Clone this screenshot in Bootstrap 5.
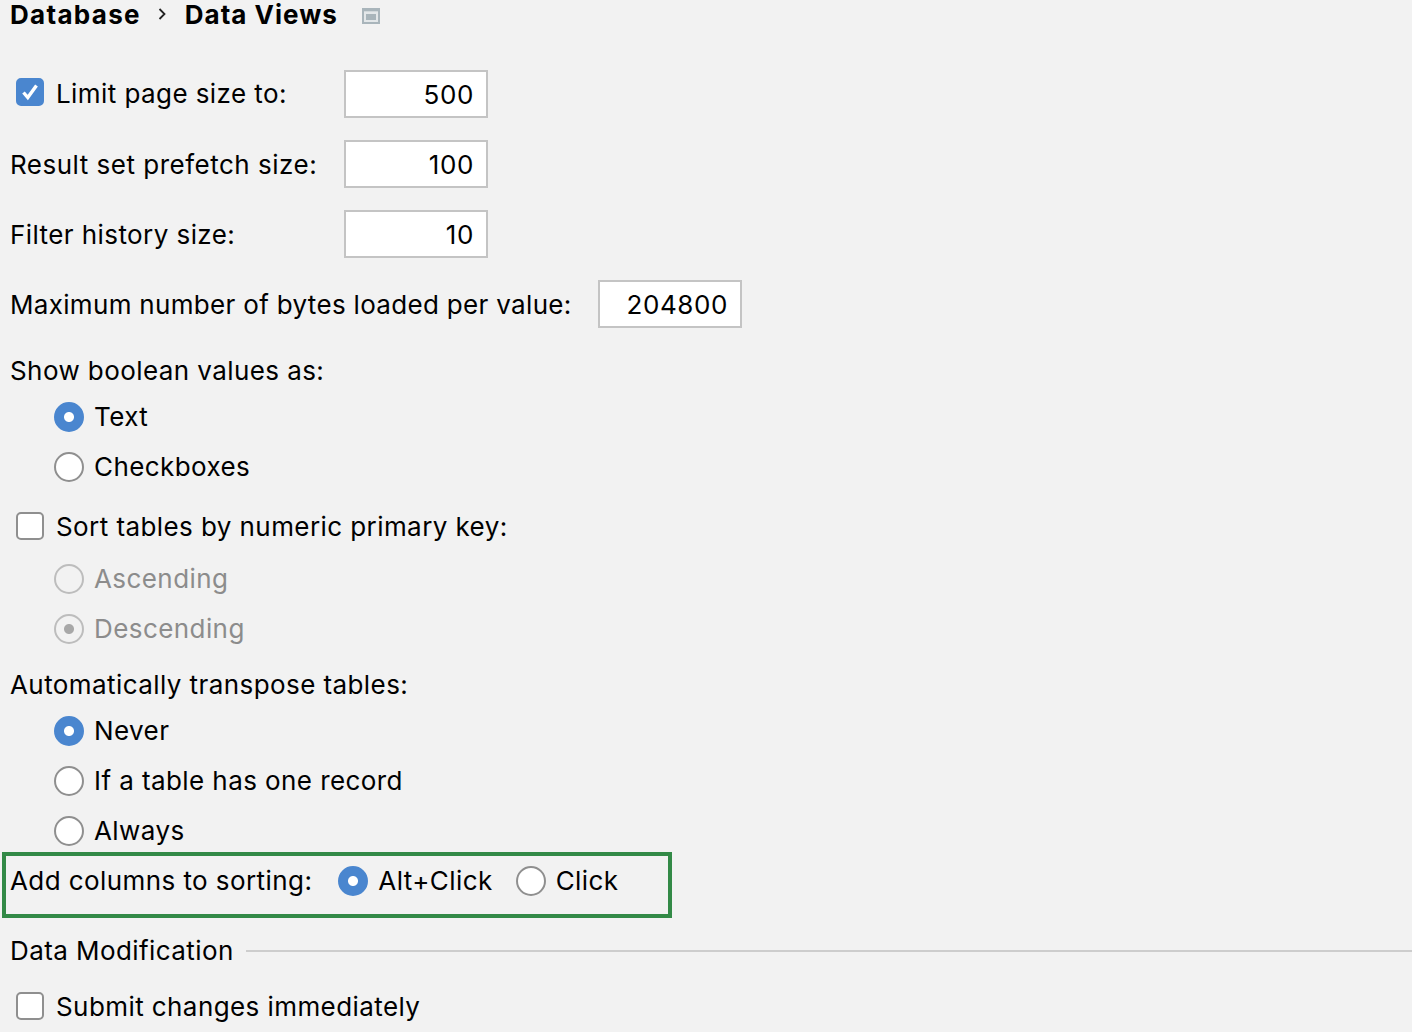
<!DOCTYPE html>
<html lang="en">
<head>
<meta charset="utf-8">
<title>Data Views</title>
<link href="https://cdn.jsdelivr.net/npm/bootstrap@5.3.0/dist/css/bootstrap.min.css" rel="stylesheet">
<style>
html,body{height:100%;}
body{background:#f2f2f2;color:#000;font-family:Inter,"Liberation Sans",sans-serif;font-size:26px;letter-spacing:.42px;overflow:hidden;}
.pane{padding-left:10px;height:1032px;overflow:hidden;}
.crumb{height:30px;line-height:30px;font-weight:700;}
.crumb-a{letter-spacing:1.3px;}
.crumb-b{letter-spacing:1px;}
.crumb-sep{margin:7px 18px 0 16px;}
.crumb-pin{margin:8px 0 0 24px;}
.num-row{height:48px;margin-bottom:22px;}
.head-gap{margin-top:40px;}
.lbl-fixed{width:334px;flex:none;}
.limit-wrap{margin-bottom:2px;}
.wide-txt{letter-spacing:.5px;}
.tight-txt{letter-spacing:.32px;}
.num-input.form-control{width:144px;height:48px;flex:none;border:2px solid #c4c4c4;border-radius:0;background:#fff;text-align:right;padding:0 12px 0 0;font-size:26px;color:#000;box-shadow:none;letter-spacing:.6px;}
.txt-row{height:36px;padding-bottom:2px;}
.opt-row{height:42px;}
.opt-row label,.last-row label,.sec-row span{padding-bottom:2px;}
.opts{padding-left:44px;display:flex;flex-direction:column;gap:8px;}
.form-check-input.box{width:28px;height:28px;margin:0 12px 2px 6px;flex:none;border:2px solid #8f8f8f;border-radius:5px;background-color:#fff;box-shadow:none;}
.form-check-input.box:checked{background-color:#4a86cf;border-color:#4a86cf;background-size:24px 24px;background-image:url("data:image/svg+xml,%3csvg xmlns='http://www.w3.org/2000/svg' viewBox='0 0 24 24'%3e%3cpath fill='none' stroke='%23fff' stroke-width='3.4' d='M5.5 12.5 L9.8 17.5 L18.5 5.5'/%3e%3c/svg%3e");}
.form-check-input.rad{width:30px;height:30px;margin:0 10px 0 0;flex:none;border:2px solid #8f8f8f;background-color:#fff;box-shadow:none;opacity:1;}
.form-check-input.rad:checked{background-color:#4a86cf;border-color:#4a86cf;background-image:radial-gradient(circle,#fff 0,#fff 4.5px,transparent 5.5px);}
.form-check-input.rad:disabled{border-color:#bdbdbd;background-color:#f2f2f2;opacity:1;}
.form-check-input.rad:disabled:checked{background-image:radial-gradient(circle,#a8a8a8 0,#a8a8a8 4.5px,transparent 5.5px);}
.muted-lbl{color:#8c8c8c;}
.sort-frame{height:66px;margin-left:-8px;width:670px;border:4px solid #338a47;padding:0 0 8px 4px;}
.sort-frame label,.sort-frame span{padding-bottom:2px;}
.sort-lbl{margin-right:26px;}
.sort-opt{margin-right:23px;}
.sec-row{height:36px;margin-top:15px;}
.sec-line{height:2px;background:#cdcdcd;margin-left:12px;}
.last-row{margin-top:13px;height:50px;}
.gap-a{margin-top:25px;}
.gap-b{margin-top:18px;}
.gap-c{margin-top:10px;}
.gap-d{margin-top:17px;}
.gap-f{margin-top:7px;}
</style>
</head>
<body>
<div class="pane">
  <div class="crumb d-flex align-items-start">
    <span class="crumb-a">Database</span>
    <svg class="crumb-sep" width="10" height="14" viewBox="0 0 10 14"><path d="M2.5 2 L7.5 7 L2.5 12" fill="none" stroke="#222" stroke-width="1.8"/></svg>
    <span class="crumb-b">Data Views</span>
    <svg class="crumb-pin" width="18" height="16" viewBox="0 0 18 16"><rect width="18" height="16" fill="#a9b5bb"/><rect x="2" y="3.3" width="14" height="10.7" fill="#e3e7e9"/><rect x="4" y="6" width="10" height="6" fill="#a9b5bb"/></svg>
  </div>

  <div class="num-row head-gap d-flex align-items-center">
    <div class="lbl-fixed limit-wrap d-flex align-items-center">
      <input class="form-check-input box" type="checkbox" id="c1" checked>
      <label for="c1">Limit page size to:</label>
    </div>
    <input class="form-control num-input" value="500">
  </div>
  <div class="num-row d-flex align-items-center">
    <label class="lbl-fixed wide-txt">Result set prefetch size:</label>
    <input class="form-control num-input" value="100">
  </div>
  <div class="num-row d-flex align-items-center">
    <label class="lbl-fixed">Filter history size:</label>
    <input class="form-control num-input" value="10">
  </div>
  <div class="num-row d-flex align-items-center mb-0">
    <label class="flex-shrink-0 tight-txt" style="width:588px">Maximum number of bytes loaded per value:</label>
    <input class="form-control num-input" value="204800">
  </div>

  <div class="txt-row gap-a d-flex align-items-center">Show boolean values as:</div>
  <div class="opts gap-f">
    <div class="opt-row d-flex align-items-center"><input class="form-check-input rad" type="radio" name="b" id="r1" checked><label for="r1">Text</label></div>
    <div class="opt-row d-flex align-items-center"><input class="form-check-input rad" type="radio" name="b" id="r2"><label for="r2">Checkboxes</label></div>
  </div>

  <div class="opt-row gap-b d-flex align-items-center">
    <input class="form-check-input box" type="checkbox" id="c2"><label for="c2">Sort tables by numeric primary key:</label>
  </div>
  <div class="opts gap-c">
    <div class="opt-row d-flex align-items-center"><input class="form-check-input rad" type="radio" name="s" id="r3" disabled><label class="muted-lbl" for="r3">Ascending</label></div>
    <div class="opt-row d-flex align-items-center"><input class="form-check-input rad" type="radio" name="s" id="r4" checked disabled><label class="muted-lbl" for="r4">Descending</label></div>
  </div>

  <div class="txt-row gap-d d-flex align-items-center">Automatically transpose tables:</div>
  <div class="opts gap-f">
    <div class="opt-row d-flex align-items-center"><input class="form-check-input rad" type="radio" name="t" id="r5" checked><label for="r5">Never</label></div>
    <div class="opt-row d-flex align-items-center"><input class="form-check-input rad" type="radio" name="t" id="r6"><label for="r6">If a table has one record</label></div>
    <div class="opt-row d-flex align-items-center"><input class="form-check-input rad" type="radio" name="t" id="r7"><label for="r7">Always</label></div>
  </div>

  <div class="sort-frame d-flex align-items-center">
    <span class="sort-lbl">Add columns to sorting:</span>
    <input class="form-check-input rad" type="radio" name="o" id="r8" checked><label class="sort-opt" for="r8">Alt+Click</label>
    <input class="form-check-input rad" type="radio" name="o" id="r9"><label for="r9">Click</label>
  </div>

  <div class="sec-row d-flex align-items-center">
    <span class="flex-shrink-0">Data Modification</span>
    <div class="sec-line flex-grow-1"></div>
  </div>
  <div class="last-row d-flex align-items-center">
    <input class="form-check-input box" type="checkbox" id="c3"><label for="c3">Submit changes immediately</label>
  </div>
</div>
<script src="https://cdn.jsdelivr.net/npm/bootstrap@5.3.0/dist/js/bootstrap.bundle.min.js"></script>
</body>
</html>
